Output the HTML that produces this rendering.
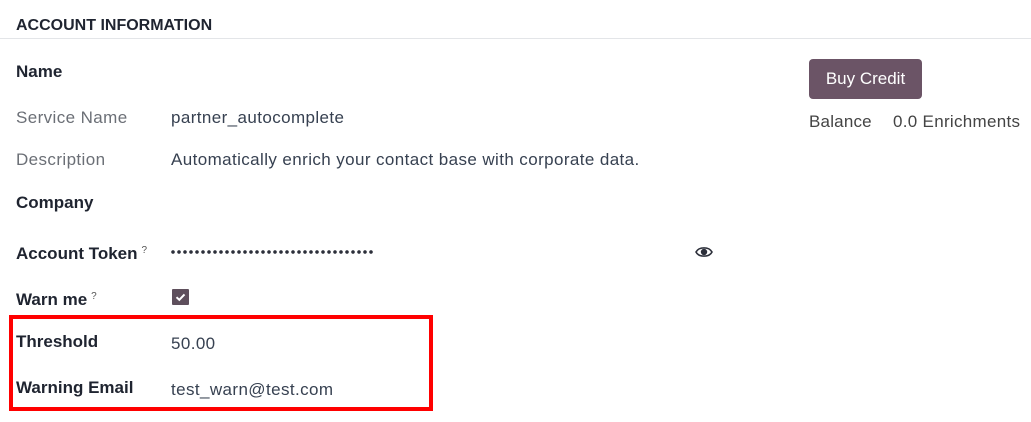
<!DOCTYPE html>
<html><head><meta charset="utf-8"><style>
body{margin:0;width:1031px;height:422px;background:#fff;font-family:"Liberation Sans",sans-serif;position:relative;overflow:hidden;color:#374151}
.t{position:absolute;white-space:nowrap;font-size:17px;line-height:20px;letter-spacing:0.4px}
.b{font-weight:bold;color:#1f2430;letter-spacing:0}
.g{color:#6b6f76}
sup{font-size:10px;font-weight:normal;color:#555;margin-left:4px;vertical-align:6px}
</style></head><body>
<div class="t b" style="left:16px;top:16px;font-size:16px">ACCOUNT INFORMATION</div>
<div style="position:absolute;left:0;right:0;top:38px;height:1px;background:#e3e5e8"></div>
<div class="t b" style="left:16px;top:62px">Name</div>
<div class="t g" style="left:16px;top:108px">Service Name</div>
<div class="t" style="left:171px;top:108px">partner_autocomplete</div>
<div class="t g" style="left:16px;top:150px">Description</div>
<div class="t" style="left:171px;top:150px">Automatically enrich your contact base with corporate data.</div>
<div class="t b" style="left:16px;top:241px">Account Token<sup>?</sup></div>
<div class="t b" style="left:16px;top:193px">Company</div>
<div style="position:absolute;left:171px;top:250px;width:202px;height:4px;background:radial-gradient(circle at 2px 2px,#2c2f3a 1.6px,transparent 2px) 0 0/6px 4px repeat-x"></div>
<svg style="position:absolute;left:695px;top:245px" width="18" height="14" viewBox="0 0 18 14"><path d="M1 7C4 1.5 14 1.5 17 7 14 12.5 4 12.5 1 7Z" fill="none" stroke="#2c2f3a" stroke-width="1.6"/><circle cx="9" cy="7" r="3.2" fill="#2c2f3a"/></svg>
<div class="t b" style="left:16px;top:287px">Warn me<sup>?</sup></div>
<div style="position:absolute;left:172px;top:289px;width:17px;height:16px;background:#5e4f5c;border-radius:1px"><svg width="17" height="16" viewBox="0 0 17 16"><path d="M4.5 8.2l2.8 2.6 5.2-5.4" fill="none" stroke="#fff" stroke-width="2"/></svg></div>
<div class="t b" style="left:16px;top:332px">Threshold</div>
<div class="t" style="left:171px;top:334px">50.00</div>
<div class="t b" style="left:16px;top:378px">Warning Email</div>
<div class="t" style="left:171px;top:380px">test_warn@test.com</div>
<div style="position:absolute;left:9px;top:315px;width:416px;height:88px;border:4px solid #ff0000"></div>
<div style="position:absolute;left:809px;top:59px;width:113px;height:40px;background:#6b5466;border-radius:4px;color:#fff;font-size:17px;line-height:40px;text-align:center">Buy Credit</div>
<div class="t" style="left:809px;top:112px;color:#444;letter-spacing:0.2px">Balance</div>
<div class="t" style="left:893px;top:112px;color:#444;letter-spacing:0.3px">0.0 Enrichments</div>
</body></html>
